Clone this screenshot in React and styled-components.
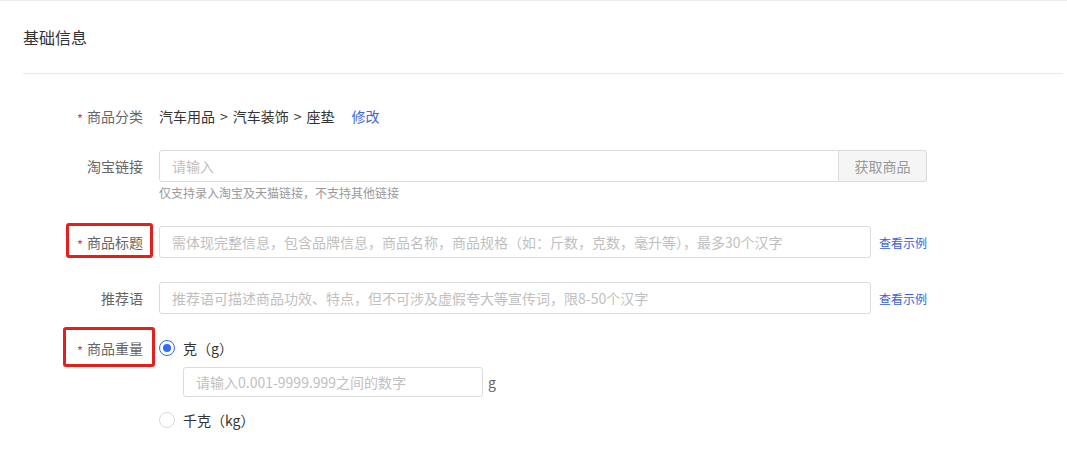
import styled, { createGlobalStyle } from 'styled-components'

const GlobalStyle = createGlobalStyle`
    html, body {
        margin: 0;
        padding: 0;
        background: #fff;
    }
    body {
        font-family: 'Noto Sans CJK SC', 'Noto Sans', sans-serif;
        color: #333;
        -webkit-font-smoothing: antialiased;
    }
    input::placeholder {
        color: #bfbfbf;
    }
`

const Page = styled.div`
    width: 1067px;
    border-top: 1px solid #eeeeee;
`

const Header = styled.div`
    margin: 0 4px 0 23px;
    padding: 24px 0 24px;
    border-bottom: 1px solid #e8e8e8;
`

const Title = styled.h2`
    margin: 0;
    font-size: 16px;
    font-weight: 400;
    line-height: 24px;
    color: #333;
`

const Form = styled.div`
    padding: 32px 0 0 23px;
    display: flex;
    flex-direction: column;
    gap: 24px;
`

const Row = styled.div`
    display: grid;
    grid-template-columns: 120px 768px;
    column-gap: 16px;
    align-items: start;
`

const Label = styled.div`
    display: flex;
    justify-content: flex-end;
    align-items: center;
    min-height: ${(p) => p.$lh || 32}px;
    font-size: 14px;
    color: #666;
    white-space: nowrap;
`

const LabelText = styled.span`
    position: relative;
    display: inline-flex;
    align-items: center;
    height: 20px;
    line-height: 20px;

    ${(p) =>
        p.$mark &&
        `
        &::after {
            content: '';
            position: absolute;
            top: ${p.$mark[0]}px;
            right: ${p.$mark[1]}px;
            bottom: ${p.$mark[2]}px;
            left: ${p.$mark[3]}px;
            border: 3px solid #e3201b;
            border-radius: 3px;
        }
    `}
`

const Star = styled.span`
    position: relative;
    top: 3px;
    color: #e4393c;
    margin-right: 4px;
    font-size: 13px;
`

const Value = styled.div`
    display: flex;
    align-items: center;
    font-size: 14px;
    line-height: 20px;
    color: #333;
`

const Sep = styled.span`
    margin: 0 5px;
`

const Link = styled.a`
    color: ${(p) => (p.$small ? '#3a5fd8' : '#4466dd')};
    font-size: ${(p) => (p.$small ? 12 : 14)}px;
    margin-left: ${(p) => p.$gap || 0}px;
    text-decoration: none;
    cursor: pointer;
    white-space: nowrap;
`

const Control = styled.div`
    display: flex;
    flex-direction: column;
`

const InlineGroup = styled.div`
    display: flex;
    align-items: center;
    width: ${(p) => p.$width || 768}px;
`

const TextInput = styled.input`
    box-sizing: border-box;
    flex: ${(p) => (p.$width ? '0 0 auto' : '1')};
    width: ${(p) => (p.$width ? `${p.$width}px` : 'auto')};
    height: ${(p) => p.$height || 32}px;
    padding: 0 12px;
    border: 1px solid #dcdcdc;
    border-radius: ${(p) => (p.$joined ? '3px 0 0 3px' : '3px')};
    font-family: inherit;
    font-size: 14px;
    color: #333;
    outline: none;
    background: #fff;
`

const AddonButton = styled.button`
    box-sizing: border-box;
    width: 88px;
    height: 32px;
    border: 1px solid #dcdcdc;
    border-left: none;
    border-radius: 0 3px 3px 0;
    background: #f5f5f5;
    color: #999;
    font-family: inherit;
    font-size: 14px;
    cursor: pointer;
`

const Hint = styled.div`
    margin-top: 2px;
    font-size: 12px;
    line-height: 18px;
    color: #999;
`

const RadioLine = styled.label`
    display: flex;
    align-items: center;
    height: 20px;
    font-size: 14px;
    color: #333;
    margin-top: ${(p) => p.$mt || 0}px;
    cursor: pointer;
`

const RadioCircle = styled.span`
    box-sizing: border-box;
    width: 16px;
    height: 16px;
    border-radius: 50%;
    border: 1px solid ${(p) => (p.$checked ? '#2f6cf0' : '#d9d9d9')};
    margin-right: 8px;
    display: flex;
    align-items: center;
    justify-content: center;

    &::after {
        content: '';
        width: 8px;
        height: 8px;
        border-radius: 50%;
        background: ${(p) => (p.$checked ? '#2f6cf0' : 'transparent')};
    }
`

const Nested = styled.div`
    display: flex;
    align-items: center;
    margin: 9px 0 0 24px;
`

const Unit = styled.span`
    margin-left: 5px;
    font-size: 14px;
    color: #666;
`

const Required = ({ children, mark, lh }) => (
    <Label $lh={lh}>
        <LabelText $mark={mark}>
            <Star>*</Star>
            {children}
        </LabelText>
    </Label>
)

const App = () => {
    return (
        <Page>
            <GlobalStyle />
            <Header>
                <Title>基础信息</Title>
            </Header>

            <Form>
                <Row>
                    <Required lh={20}>商品分类</Required>
                    <Value>
                        汽车用品<Sep>&gt;</Sep>汽车装饰<Sep>&gt;</Sep>座垫
                        <Link $gap={17}>修改</Link>
                    </Value>
                </Row>

                <Row>
                    <Label>
                        <LabelText>淘宝链接</LabelText>
                    </Label>
                    <Control>
                        <InlineGroup>
                            <TextInput $joined placeholder="请输入" />
                            <AddonButton>获取商品</AddonButton>
                        </InlineGroup>
                        <Hint>仅支持录入淘宝及天猫链接，不支持其他链接</Hint>
                    </Control>
                </Row>

                <Row>
                    <Required mark={[-9, -10, -6, -11]}>商品标题</Required>
                    <InlineGroup>
                        <TextInput
                            $width={712}
                            placeholder="需体现完整信息，包含品牌信息，商品名称，商品规格（如：斤数，克数，毫升等），最多30个汉字"
                        />
                        <Link $small $gap={8}>
                            查看示例
                        </Link>
                    </InlineGroup>
                </Row>

                <Row>
                    <Label>
                        <LabelText>推荐语</LabelText>
                    </Label>
                    <InlineGroup>
                        <TextInput
                            $width={712}
                            placeholder="推荐语可描述商品功效、特点，但不可涉及虚假夸大等宣传词，限8-50个汉字"
                        />
                        <Link $small $gap={8}>
                            查看示例
                        </Link>
                    </InlineGroup>
                </Row>

                <Row>
                    <Required lh={20} mark={[-11, -12, -9, -14]}>
                        商品重量
                    </Required>
                    <Control>
                        <RadioLine>
                            <RadioCircle $checked />
                            克（g）
                        </RadioLine>
                        <Nested>
                            <TextInput
                                $width={300}
                                $height={30}
                                placeholder="请输入0.001-9999.999之间的数字"
                            />
                            <Unit>g</Unit>
                        </Nested>
                        <RadioLine $mt={13}>
                            <RadioCircle />
                            千克（kg）
                        </RadioLine>
                    </Control>
                </Row>
            </Form>
        </Page>
    )
}

export default App
